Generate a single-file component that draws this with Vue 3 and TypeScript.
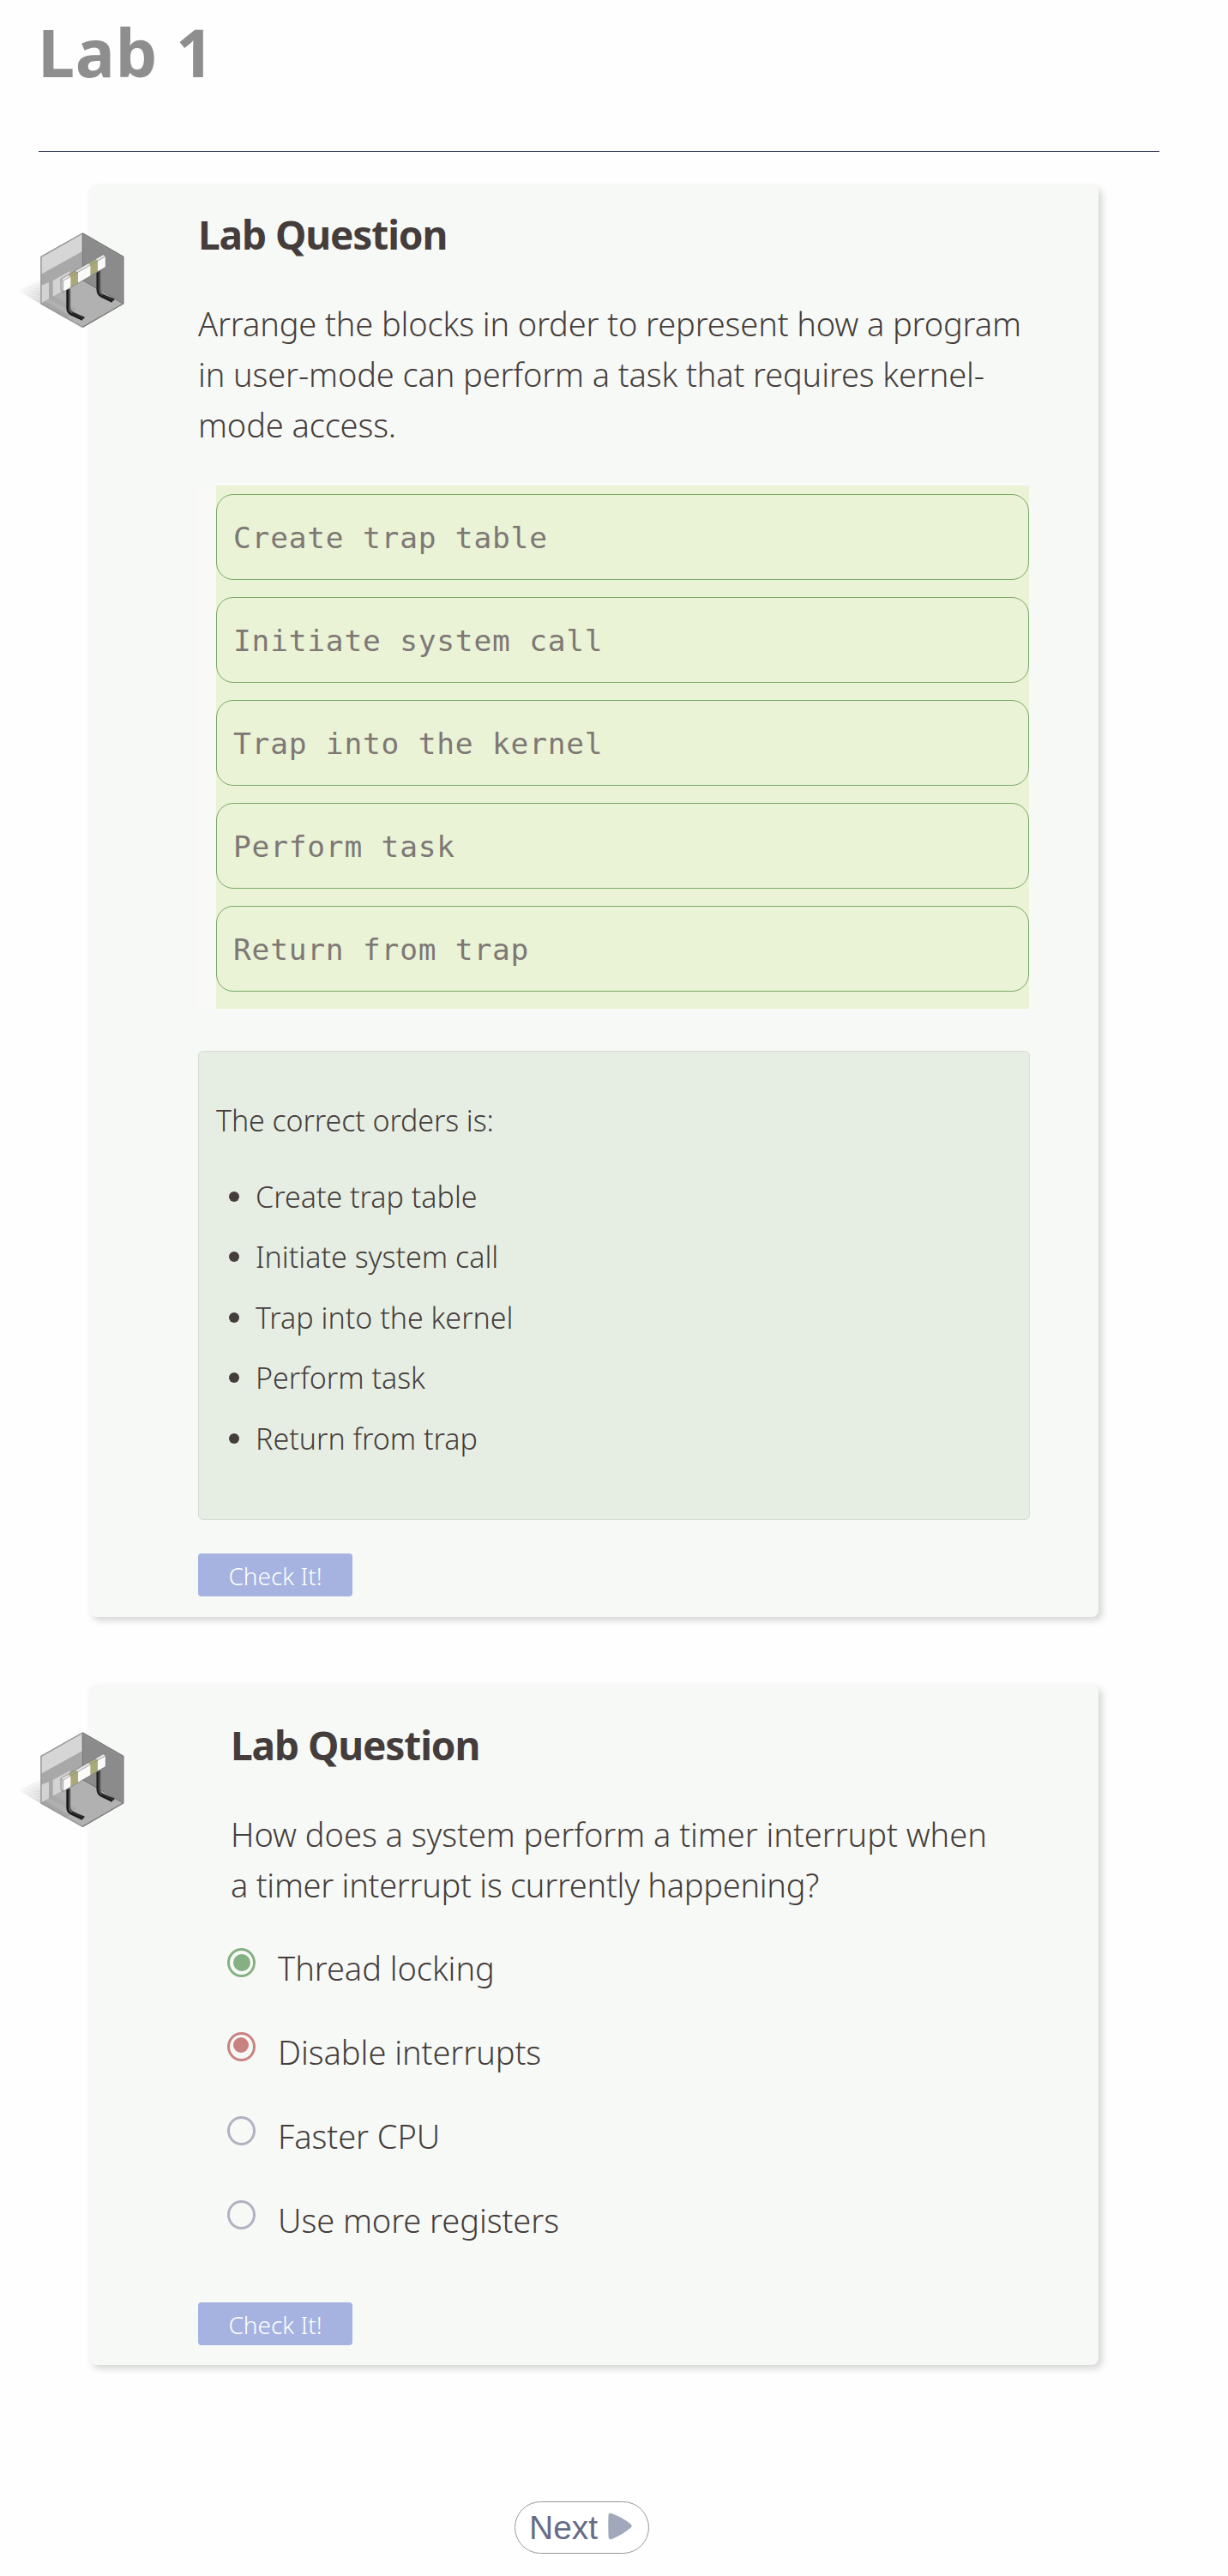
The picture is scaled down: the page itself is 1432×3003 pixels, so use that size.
<script setup lang="ts">
import { defineComponent, h } from 'vue'

type OptionState = 'correct' | 'wrong' | 'empty'

interface Option {
  label: string
  state: OptionState
}

const steps: string[] = [
  'Create trap table',
  'Initiate system call',
  'Trap into the kernel',
  'Perform task',
  'Return from trap',
]

const options: Option[] = [
  { label: 'Thread locking', state: 'correct' },
  { label: 'Disable interrupts', state: 'wrong' },
  { label: 'Faster CPU', state: 'empty' },
  { label: 'Use more registers', state: 'empty' },
]

const poly = (points: string, fill: string, extra: Record<string, string | number> = {}) =>
  h('polygon', { points, fill, ...extra })

const line = (d: string, stroke: string, width: number) =>
  h('path', { d, stroke, 'stroke-width': width, fill: 'none', 'stroke-linejoin': 'round' })

// Isometric grey cube holding a striped barrier, with a hatched shadow on its left
const LabIcon = defineComponent({
  setup: () => () =>
    h('svg', { viewBox: '0 0 480 450', width: 160, height: 150, 'aria-hidden': 'true' }, [
      h('defs', [
        h('linearGradient', { id: 'lab-shade' }, [
          h('stop', { offset: '0', 'stop-color': '#fbfbfb' }),
          h('stop', { offset: '1', 'stop-color': '#d8d8d8' }),
        ]),
        h('linearGradient', { id: 'lab-fade', x1: 0, y1: 0, x2: 0, y2: 1 }, [
          h('stop', { offset: '0', 'stop-color': '#fefefe', 'stop-opacity': 0.95 }),
          h('stop', { offset: '0.55', 'stop-color': '#fefefe', 'stop-opacity': 0 }),
        ]),
      ]),
      poly('34,267 112,230 112,313', 'url(#lab-shade)'),
      poly('34,267 112,230 112,313', 'url(#lab-fade)'),
      ...[250, 260, 270, 280, 290].map((y) =>
        line(`M${58 + Math.abs(y - 264)} ${y} L112 ${y + 7}`, '#f4f4f4', 2),
      ),
      poly('259,64 403,147 403,313 259,230', '#8b8b8b'),
      poly('112,313 259,230 403,313 259,396', '#b1b1b1'),
      poly('112,313 128,304 215,355 200,363', '#a5a5a5'),
      poly('138,294 158,285 240,333 222,338', '#a9a9a9'),
      poly('112,147 259,64 259,230 112,313', '#a8a8a8'),
      poly('114,149 257,68 257,130 114,209', '#d6d6d6'),
      poly('114,248 141,238 141,296 114,310', '#d3d3d3'),
      poly('155,231 215,198 215,254 155,288', '#d3d3d3'),
      line('M259 66 V230 L401 312', '#707070', 3),
      line('M259 230 L114 312', '#a0a0a0', 2),
      line('M259 66 L401 148 V312 L259 394', '#7b7b7b', 4),
      line('M259 394 L114 312 V148 L259 66', '#989898', 4),
      line('M259 70 L397 150 V308', '#a2a2a2', 1.5),
      line('M318 196 V262 Q318 276 328 281 L366 301', '#4c4c4c', 7),
      line('M311 198 V264 Q312 280 324 286 L363 305', '#1b1b1b', 7),
      line('M328 282 L370 299', '#2a2a2a', 7),
      line('M213 260 V325 Q213 337 224 343 L262 363', '#555555', 7),
      line('M206 262 V327 Q206 343 219 349 L259 368', '#1b1b1b', 8),
      line('M222 345 L265 362', '#2a2a2a', 7),
      poly('183,226 331,140 340,146 191,232', '#e6e6e6'),
      poly('183,226 191,232 191,271 183,265', '#cccccc'),
      poly('191,232 340,146 340,184 191,271', '#fafafa'),
      poly('208,212 233,197 243,202 243,240 217,256 217,217', '#a9aa78'),
      poly('278,171 304,156 312,161 312,200 286,216 286,176', '#a9aa78'),
      line('M191 271 L183 265 V226 L331 140 L340 146 V184 Z', '#6d6d6d', 2),
      line('M183 226 L191 232 V271 M191 232 L340 146', '#8a8a8a', 2),
    ]),
})
</script>

<template>
  <main class="page">
    <h1 class="title">Lab 1</h1>
    <hr class="rule" />

    <section class="card card-order">
      <LabIcon class="icon" />
      <h2 class="heading">Lab Question</h2>
      <p class="prompt">
        Arrange the blocks in order to represent how a program<br />in user-mode can perform a task that
        requires kernel-<br />mode access.
      </p>
      <div class="blocks-wrap">
        <div class="blocks">
          <div v-for="step in steps" :key="step" class="block">{{ step }}</div>
        </div>
      </div>
      <div class="answer">
        <p class="answer-title">The correct orders is:</p>
        <ul class="answer-list">
          <li v-for="step in steps" :key="step">{{ step }}</li>
        </ul>
      </div>
      <button class="check" type="button">Check It!</button>
    </section>

    <section class="card card-choice">
      <LabIcon class="icon" />
      <h2 class="heading">Lab Question</h2>
      <p class="prompt">
        How does a system perform a timer interrupt when<br /><span class="tight">a timer interrupt is currently happening?</span>
      </p>
      <div class="options">
        <label v-for="option in options" :key="option.label" class="option">
          <span class="radio" :class="option.state"></span>
          <span>{{ option.label }}</span>
        </label>
      </div>
      <button class="check" type="button">Check It!</button>
    </section>

    <button class="next" type="button">
      <span>Next</span>
      <svg class="arrow" viewBox="0 0 28 32" width="28" height="32" aria-hidden="true">
        <path
          d="M0.5 3.5 Q0.5 0 4 1 Q17 5.5 26.5 13.5 Q28.8 15.8 26.5 17.8 Q16 26.5 4.5 31 Q0.8 32 0.6 28.5 Q0 16 0.5 3.5 Z"
          fill="#a1a8bb"
        />
      </svg>
    </button>
  </main>
</template>

<style scoped>
.page {
  box-sizing: border-box;
  width: 1432px;
  height: 3003px;
  padding-top: 8px;
  overflow: hidden;
  background: #fefefe;
  color: #453d3c;
  font-family: 'Noto Sans', 'Open Sans', sans-serif;
  font-weight: 300;
}

.title {
  margin: 0 0 62px 44px;
  color: #8e8e8e;
  font-size: 77px;
  font-weight: 700;
  line-height: 106px;
  letter-spacing: 0.8px;
}

.rule {
  height: 1px;
  margin: 0 80px 0 45px;
  border: 0;
  background: #262f4f;
}

.card {
  position: relative;
  box-sizing: border-box;
  width: 1177px;
  margin-left: 104px;
  border-radius: 8px;
  background: #f7f9f6;
  box-shadow: 4px 4px 8px rgba(0, 0, 0, 0.17);
}

.card-order {
  height: 1669px;
  margin-top: 39px;
  padding: 27px 80px 23px 127px;
}

.card-choice {
  height: 793px;
  margin-top: 79px;
  padding: 40px 80px 22px 127px;
}

.icon {
  position: absolute;
  top: 34px;
  left: -94px;
}

.heading {
  margin: 0;
  font-size: 46px;
  font-weight: 700;
  line-height: 60px;
  letter-spacing: -1.1px;
}

.prompt {
  margin: 45px 0 0;
  font-size: 38px;
  line-height: 59px;
  letter-spacing: -0.12px;
  white-space: nowrap;
}

.blocks-wrap {
  width: 970px;
  height: 611px;
  margin-top: 41px;
  background: #f9f9f8;
}

.blocks {
  display: flex;
  flex-direction: column;
  box-sizing: border-box;
  gap: 20px;
  width: 948px;
  height: 610px;
  margin-left: 21px;
  padding: 10px 0 20px;
  background: #eaf3d6;
}

.block {
  box-sizing: border-box;
  height: 100px;
  padding-left: 19px;
  border: 1px solid #7aa866;
  border-radius: 20px;
  color: #7e7875;
  font-family: 'DejaVu Sans Mono', monospace;
  font-size: 34.5px;
  font-weight: 400;
  line-height: 100px;
  letter-spacing: 0.8px;
}

.answer {
  box-sizing: border-box;
  width: 970px;
  height: 547px;
  margin-top: 48px;
  padding: 44.5px 20px 0;
  border: 1px solid #d5dcd5;
  border-radius: 6px;
  background: #e6eee3;
  font-size: 34px;
  line-height: 70.5px;
}

.answer-title {
  margin: 0 0 18.5px;
  letter-spacing: -0.1px;
}

.answer-list {
  margin: 0;
  padding: 0;
  list-style: none;
}

.answer-list li {
  display: flex;
  align-items: center;
  gap: 19px;
  padding-left: 15px;
}

.answer-list li::before {
  content: '';
  width: 12px;
  height: 12px;
  border-radius: 50%;
  background: #453d3c;
}

.check {
  display: block;
  width: 180px;
  height: 50px;
  margin-top: 39px;
  padding: 3px 0 0;
  border: 0;
  border-radius: 4px;
  background: #a6b3e0;
  color: #fff;
  font-family: inherit;
  font-size: 28px;
  font-weight: 350;
  line-height: 47px;
}

.card-choice .heading,
.card-choice .prompt {
  margin-left: 38px;
}

.card-choice .prompt {
  letter-spacing: -0.04px;
}

.card-choice .tight {
  letter-spacing: -0.28px;
}

.options {
  margin: 18px 0 0 34px;
}

.option {
  display: flex;
  align-items: center;
  gap: 26px;
  height: 98px;
  font-size: 38px;
  line-height: 98px;
  letter-spacing: -0.05px;
}

.radio {
  display: grid;
  box-sizing: border-box;
  place-items: center;
  width: 33px;
  height: 34px;
  margin-bottom: 13px;
  border: 3px solid #b1b1c1;
  border-radius: 50%;
}

.correct {
  border-color: #85b083;
}

.wrong {
  border-color: #c9827f;
}

.correct::before,
.wrong::before {
  content: '';
  width: 20px;
  height: 20px;
  border-radius: 50%;
  background: #85b083;
}

.wrong::before {
  width: 18px;
  height: 18px;
  margin: 0 2px 3px 0;
  background: #c9827f;
}

.card-choice .check {
  margin-top: 47px;
}

.next {
  display: flex;
  align-items: center;
  box-sizing: border-box;
  gap: 12px;
  width: 157px;
  height: 61px;
  margin: 159px 0 0 600px;
  padding: 0 0 0 16px;
  border: 1px solid #999;
  border-radius: 31px;
  background: #fff;
  color: #666c88;
  font-family: 'Liberation Sans', Arial, sans-serif;
  font-size: 39px;
  line-height: 59px;
}

.arrow {
  margin-bottom: 4px;
}
</style>

<style>
body {
  background: #fefefe;
}
</style>
